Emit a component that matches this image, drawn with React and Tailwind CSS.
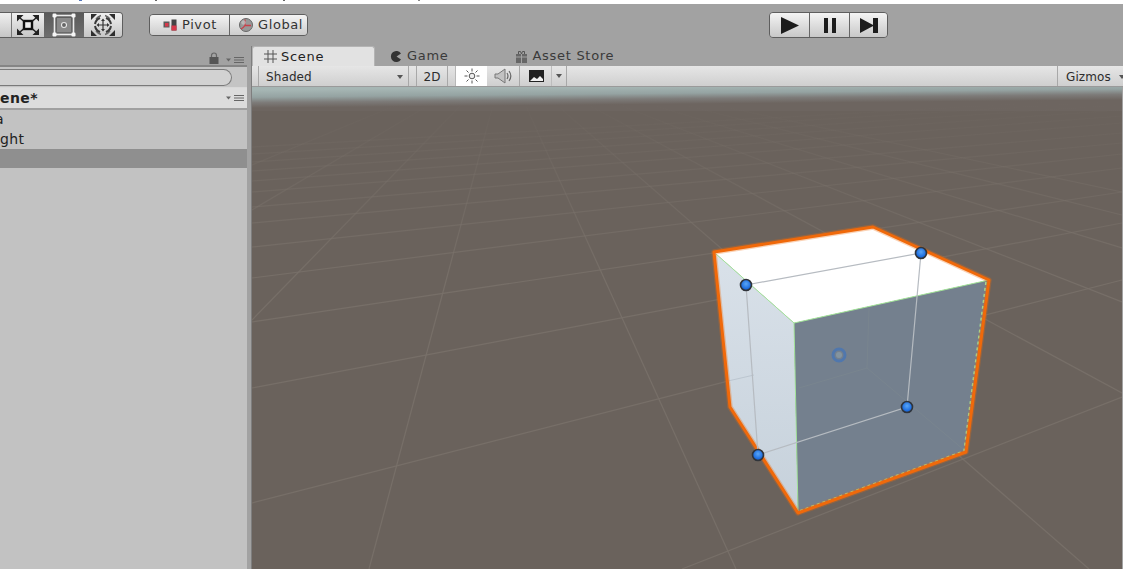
import React from 'react'

const ui = { fontFamily: '"DejaVu Sans", sans-serif' }

// ground plane lines running towards the far right edge
const crossLines = [
  [683, 569, 1123, 397],
  [253, 503, 1123, 280],
  [253, 388, 1123, 223],
  [253, 322, 1123, 192],
  [253, 278, 1123, 168],
  [253, 247, 1123, 154],
  [253, 223, 1123, 143],
  [253, 207, 1123, 133],
  [253, 192, 1123, 123],
  [253, 181, 1123, 116],
  [253, 171, 1123, 110],
  [253, 162, 1123, 105],
  [253, 154, 1123, 101],
  [253, 147, 1123, 98],
]

// these all meet at the vanishing point above the horizon
const vanishX = 506
const vanishY = 60
const depthEnds = [
  [370, 569],
  [737, 569],
  [1090, 569],
  [253, 320],
  [253, 210],
  [253, 165],
  [1123, 393],
  [1123, 302],
  [1123, 248],
  [1123, 215],
  [1123, 192],
]

const handles = [
  [747, 285],
  [922, 253],
  [908, 407],
  [759, 455],
]

function MenuIcon() {
  return (
    <svg width="18" height="8" viewBox="0 0 18 8" className="block">
      <path d="M0 2.5h5L2.5 5.5z" fill="#666" />
      <path d="M8 1.5h10M8 4h10M8 6.5h10" stroke="#666" strokeWidth="1.1" />
    </svg>
  )
}

function ScaleIcon() {
  return (
    <svg width="24" height="22" viewBox="0 0 24 22">
      <rect x="8" y="7" width="8" height="8" fill="#eee" stroke="#111" strokeWidth="2.4" />
      <path d="M1 1h6.5L1 7.5zM23 1h-6.5L23 7.5zM1 21h6.5L1 14.5zM23 21h-6.5L23 14.5z" fill="#222" />
      <path d="M4 4l3.5 3M20 4l-3.5 3M4 18l3.5-3M20 18l-3.5-3" stroke="#222" strokeWidth="1.6" />
    </svg>
  )
}

function RectIcon() {
  return (
    <svg width="24" height="24" viewBox="0 0 24 24">
      <rect x="5" y="5" width="14" height="14" fill="#8a8a8a" />
      <rect x="2.5" y="2.5" width="19" height="19" fill="none" stroke="#ececec" strokeWidth="1.6" />
      <circle cx="12" cy="12" r="2.5" fill="#666" stroke="#e6e6e6" strokeWidth="1.1" />
      <rect x="0.5" y="0.5" width="4" height="4" rx="1.2" fill="#f6f6f6" />
      <rect x="19.5" y="0.5" width="4" height="4" rx="1.2" fill="#f6f6f6" />
      <rect x="0.5" y="19.5" width="4" height="4" rx="1.2" fill="#f6f6f6" />
      <rect x="19.5" y="19.5" width="4" height="4" rx="1.2" fill="#f6f6f6" />
    </svg>
  )
}

function TransformIcon() {
  return (
    <svg width="26" height="24" viewBox="0 0 26 24">
      {/* rotate arcs with scale wedges in the corners */}
      <path d="M6 6A10 10 0 0 1 11 2.5M20 6A10 10 0 0 0 15 2.5M6 18A10 10 0 0 0 11 21.5M20 18A10 10 0 0 1 15 21.5" fill="none" stroke="#666" strokeWidth="1.4" />
      <path d="M1 1h6L1 7zM25 1h-6l6 6zM1 23h6l-6-6zM25 23h-6l6-6z" fill="#2e2e2e" />
      <path d="M5 11a8 8 0 0 1 5-6M21 11a8 8 0 0 0-5-6M5 13a8 8 0 0 0 5 6M21 13a8 8 0 0 1-5 6" fill="none" stroke="#3a3a3a" strokeWidth="2" />
      <path d="M13 8v8M9 12h8" stroke="#333" strokeWidth="1.2" />
      <path d="M13 5.5l2 2.5h-4zM13 18.5l2-2.5h-4zM6.5 12L9 10v4zM19.5 12L17 10v4z" fill="#333" />
    </svg>
  )
}

function PivotIcon() {
  return (
    <svg width="14" height="12" viewBox="0 0 14 12">
      <rect x="0.5" y="2.5" width="6" height="6" fill="#5a5a5a" />
      <rect x="2" y="4" width="3.5" height="3.5" fill="#d8384a" />
      <rect x="8.5" y="0.5" width="5" height="11" fill="#444" />
      <rect x="8.5" y="6.5" width="5" height="5" fill="#d8384a" />
    </svg>
  )
}

function GlobalIcon() {
  return (
    <svg width="14" height="14" viewBox="0 0 14 14">
      <circle cx="7" cy="7" r="6.5" fill="#989898" stroke="#666" />
      <path d="M6 1.5v6h6M2 11c2-1 3-2 4-3.5" stroke="#c8404a" strokeWidth="1.3" fill="none" />
      <circle cx="4.5" cy="4.5" r="2.2" fill="#c8c8c8" opacity="0.7" />
    </svg>
  )
}

function Sun() {
  return (
    <svg width="16" height="16" viewBox="0 0 16 16">
      <circle cx="8" cy="8" r="2.8" fill="#eee" stroke="#555" />
      <path d="M8 0.5v3M8 12.5v3M0.5 8h3M12.5 8h3M2.5 2.5l2 2M11.5 11.5l2 2M13.5 2.5l-2 2M4.5 11.5l-2 2" stroke="#555" />
    </svg>
  )
}

function Speaker() {
  return (
    <svg width="18" height="16" viewBox="0 0 18 16">
      <path d="M1 6h3L11 1v14L4 10H1z" fill="#c2c2c2" stroke="#777" />
      <path d="M13 5c1.3 2 1.3 4 0 6M15 3c2.2 3 2.2 7 0 10" fill="none" stroke="#666" strokeWidth="1.2" />
    </svg>
  )
}

function SceneView() {
  return (
    <svg viewBox="253 87 870 482" className="block w-[870px] h-[482px]">
      <defs>
        <linearGradient id="sky" gradientUnits="userSpaceOnUse" x1="680" y1="86" x2="680.17" y2="104">
          <stop offset="0" stopColor="#a6b6b4" />
          <stop offset="0.4" stopColor="#95a3a2" />
          <stop offset="0.7" stopColor="#7d7b79" />
          <stop offset="1" stopColor="#6d6560" />
        </linearGradient>
        <linearGradient id="gridFade" gradientUnits="userSpaceOnUse" x1="0" y1="100" x2="0" y2="280">
          <stop offset="0" stopColor="#787069" stopOpacity="0" />
          <stop offset="0.35" stopColor="#787069" stopOpacity="0.35" />
          <stop offset="1" stopColor="#787069" stopOpacity="0.9" />
        </linearGradient>
        <linearGradient id="sideFace" x1="0" y1="0" x2="0" y2="1">
          <stop offset="0" stopColor="#d9e1e9" />
          <stop offset="1" stopColor="#c6d1db" />
        </linearGradient>
        <radialGradient id="knob" cx="0.5" cy="0.4" r="0.6">
          <stop offset="0" stopColor="#5aa6f5" />
          <stop offset="0.7" stopColor="#1f6fe0" />
          <stop offset="1" stopColor="#1a55b0" />
        </radialGradient>
      </defs>

      <rect x="253" y="87" width="870" height="482" fill="#6a625c" />
      <rect x="253" y="87" width="870" height="24" fill="url(#sky)" />

      {/* ground grid */}
      <g stroke="url(#gridFade)" strokeWidth="1.2" fill="none">
        {crossLines.map(([x1, y1, x2, y2]) => (
          <line key={`${y1}-${y2}`} x1={x1} y1={y1} x2={x2} y2={y2} />
        ))}
        {depthEnds.map(([x, y]) => {
          // start the line just below the horizon
          const t = (106 - vanishY) / (y - vanishY)
          return <line key={`${x}-${y}`} x1={vanishX + (x - vanishX) * t} y1={106} x2={x} y2={y} />
        })}
      </g>

      {/* cube faces */}
      <polygon points="715,252 874,227 990,280 795,323" fill="#ffffff" />
      <polygon points="715,252 795,323 799,513 731,407" fill="url(#sideFace)" />
      <polygon points="795,323 990,280 967,452 799,513" fill="#74808e" />

      {/* back edges seen through the faces */}
      <path d="M870 308L868 368L800 388M868 368L965 450" stroke="#79858f" strokeWidth="1" fill="none" />
      <path d="M729 381L755 375" stroke="#bcc6d0" fill="none" />

      {/* selected mesh wire */}
      <g stroke="#a3e49a" strokeWidth="1" fill="none">
        <path d="M717 254L795 323L990 280M795 323L799 511" />
        <path d="M987 282L965 451L800 511" strokeDasharray="3 3" strokeWidth="1.5" />
      </g>

      {/* selection outline */}
      <polygon
        points="715,252 874,227 990,280 967,452 799,513 731,407"
        fill="none"
        stroke="#f0690a"
        strokeOpacity="0.3"
        strokeWidth="5.5"
        strokeLinejoin="round"
      />
      <polygon
        points="715,252 874,227 990,280 967,452 799,513 731,407"
        fill="none"
        stroke="#f0690a"
        strokeWidth="3"
        strokeLinejoin="round"
      />

      {/* rect handles */}
      <polygon points="747,285 922,253 908,407 759,455" fill="none" stroke="#b6bbc1" strokeWidth="1.2" />
      {handles.map(([cx, cy]) => (
        <circle key={cx} cx={cx} cy={cy} r="5.5" fill="url(#knob)" stroke="#30343a" strokeWidth="1.6" />
      ))}
      <circle cx="840" cy="355" r="3" fill="#84949f" />
      <circle cx="840" cy="355" r="6" fill="none" stroke="#5077ad" strokeWidth="3" />
    </svg>
  )
}

export default function App() {
  return (
    <div className="w-[1123px] h-[569px] overflow-hidden bg-[#a2a2a2] text-[#222]" style={ui}>
      {/* bottom edge of the menu bar */}
      <div className="flex h-[4px] bg-white">
        <span className="ml-[79px] w-[3px] h-[1px] bg-[#5577bb]" />
        <span className="ml-[73px] w-[2px] h-[1px] bg-[#666]" />
        <span className="ml-[126px] w-[2px] h-[1px] bg-[#666]" />
        <span className="ml-[133px] w-[2px] h-[1px] bg-[#888]" />
      </div>

      {/* main toolbar */}
      <div className="flex items-start h-[42px]">
        <div className="flex mt-[8px] h-[26px] w-[123px] rounded-r-[4px] border border-l-0 border-[#5e5e5e] overflow-hidden">
          <div className="w-[12px] bg-linear-to-b from-[#f0f0f0] to-[#c6c6c6] border-r border-[#777]" />
          <div className="w-[32px] flex items-center justify-center bg-linear-to-b from-[#f0f0f0] to-[#c6c6c6]">
            <ScaleIcon />
          </div>
          <div className="w-[40px] flex items-center justify-center bg-linear-to-b from-[#5a5a5a] to-[#6e6e6e]">
            <RectIcon />
          </div>
          <div className="flex-1 flex items-center justify-center bg-linear-to-b from-[#f0f0f0] to-[#c6c6c6]">
            <TransformIcon />
          </div>
        </div>

        <div className="flex mt-[10px] ml-[26px] h-[22px] w-[159px] rounded-[4px] border border-[#5e5e5e] overflow-hidden text-[13px] tracking-[0.6px] text-[#333]">
          <div className="w-[80px] flex items-center pl-[13px] gap-[5px] bg-linear-to-b from-[#f4f4f4] to-[#cdcdcd] border-r border-[#666]">
            <PivotIcon />
            <span>Pivot</span>
          </div>
          <div className="flex-1 flex items-center pl-[9px] gap-[5px] bg-linear-to-b from-[#f4f4f4] to-[#cdcdcd]">
            <GlobalIcon />
            <span>Global</span>
          </div>
        </div>

        <div className="flex mt-[8px] ml-[461px] h-[26px] w-[119px] rounded-[4px] border border-[#5e5e5e] overflow-hidden">
          <div className="w-[40px] flex items-center justify-center bg-linear-to-b from-[#f4f4f4] to-[#c8c8c8] border-r border-[#666]">
            <svg width="18" height="17" viewBox="0 0 18 17"><path d="M0 0l18 8.5L0 17z" fill="#1c1c1c" /></svg>
          </div>
          <div className="w-[40px] flex items-center justify-center bg-linear-to-b from-[#f4f4f4] to-[#c8c8c8] border-r border-[#666]">
            <svg width="12" height="15" viewBox="0 0 12 15"><path d="M0 0h4v15H0zM8 0h4v15H8z" fill="#1c1c1c" /></svg>
          </div>
          <div className="flex-1 flex items-center justify-center bg-linear-to-b from-[#f4f4f4] to-[#c8c8c8]">
            <svg width="18" height="15" viewBox="0 0 18 15"><path d="M0 0l14 7.5L0 15zM13 0h5v15h-5z" fill="#1c1c1c" /></svg>
          </div>
        </div>
      </div>

      <div className="flex h-[523px]">
        {/* hierarchy panel */}
        <div className="w-[247px] flex flex-col">
          <div className="h-[19px] flex items-end justify-end pb-[1px] pr-[3px] gap-[7px]">
            <svg width="10" height="12" viewBox="0 0 10 12" className="block">
              <path d="M2.5 5V3.5a2.5 2.5 0 0 1 5 0V5" fill="none" stroke="#666" strokeWidth="1.2" />
              <rect x="0.5" y="5" width="9" height="7" fill="#555" />
            </svg>
            <MenuIcon />
          </div>
          <div className="h-[23px] bg-[#c4c4c4] border-t-2 border-[#858585] flex items-center border-b border-b-[#d8d8d8]">
            <div className="w-[232px] h-[17px] rounded-r-full border border-l-0 border-[#7a7a7a] bg-[#d2d2d2]" />
          </div>
          <div className="h-[22px] bg-[#dcdcdc] border-b-2 border-[#a0a0a0] flex items-center justify-between pr-[3px]">
            <span className="text-[14px] font-bold tracking-[0.4px]">ene*</span>
            <MenuIcon />
          </div>
          <div className="flex-1 bg-[#c2c2c2] text-[14px] overflow-hidden">
            <div className="h-[19px] flex items-center"><span className="-ml-[5px]">a</span></div>
            <div className="h-[20px] flex items-center tracking-[0.4px]">ght</div>
            <div className="h-[19px] bg-[#8f8f8f]" />
          </div>
        </div>

        <div className="w-[5px] bg-[#a2a2a2] border-r border-[#7e7e7e]" />

        {/* scene panel */}
        <div className="flex-1 flex flex-col min-w-0">
          <div className="h-[20px] flex items-stretch text-[13px] tracking-[0.7px] text-[#3a3a3a]">
            <div className="w-[123px] flex items-center gap-[4px] pl-[11px] rounded-t-[3px] bg-[#e2e2e2] border border-b-0 border-[#b4b4b4] text-[#222]">
              <svg width="13" height="13" viewBox="0 0 13 13">
                <path d="M4 0v13M9 0v13M0 4h13M0 9h13" stroke="#555" />
              </svg>
              <span>Scene</span>
            </div>
            <div className="flex items-center gap-[6px] ml-[15px]">
              <svg width="11" height="11" viewBox="0 0 11 11">
                <path d="M11 2.5A5.5 5.5 0 1 0 11 8.5L6.5 5.5z" fill="#333" />
              </svg>
              <span>Game</span>
            </div>
            <div className="flex items-center gap-[5px] ml-[66px]">
              <svg width="13" height="13" viewBox="0 0 13 13">
                <path d="M1 4h11v9H1z" fill="#666" />
                <path d="M3.5 4V1.5h2L6.5 4l1-2.5h2V4" fill="none" stroke="#555" />
                <path d="M6.5 4v9M1 7h11" stroke="#a2a2a2" />
              </svg>
              <span>Asset Store</span>
            </div>
          </div>

          {/* scene view options */}
          <div className="h-[21px] flex items-stretch bg-linear-to-b from-[#e6e6e6] to-[#cfcfcf] text-[12px] tracking-[0.1px] text-[#2c2c2c] border-b border-[#9a9a9a]">
            <div className="w-[7px] border-r border-[#a8a8a8]" />
            <div className="w-[150px] flex items-center justify-between pl-[7px] pr-[5px] pt-[1px] border-r border-[#a8a8a8]">
              <span>Shaded</span>
              <svg width="6" height="4" viewBox="0 0 6 4"><path d="M0 0h6L3 4z" fill="#555" /></svg>
            </div>
            <div className="w-[8px] border-r border-[#a8a8a8]" />
            <div className="w-[31px] flex items-center justify-center pt-[1px] border-r border-[#a8a8a8]">2D</div>
            <div className="w-[8px] border-r border-[#b8b8b8]" />
            <div className="w-[31px] flex items-center justify-center bg-white">
              <Sun />
            </div>
            <div className="w-[33px] flex items-center justify-center border-r border-[#a8a8a8]">
              <Speaker />
            </div>
            <div className="w-[47px] flex items-center border-r border-[#a8a8a8] pl-[9px]">
              <svg width="15" height="12" viewBox="0 0 15 12">
                <rect width="15" height="12" fill="#222" />
                <path d="M1 11l4-4 3 2 3-3 3 3v2z" fill="#f2f2f2" />
              </svg>
              <span className="ml-[7px] h-full w-px bg-[#bdbdbd]" />
              <svg width="6" height="4" viewBox="0 0 6 4" className="ml-[4px]"><path d="M0 0h6L3 4z" fill="#555" /></svg>
            </div>
            <div className="flex-1" />
            <div className="w-[66px] flex items-center gap-[8px] pl-[8px] pt-[1px] border-l border-[#a8a8a8] whitespace-nowrap">
              <span>Gizmos</span>
              <svg width="6" height="4" viewBox="0 0 6 4" className="shrink-0"><path d="M0 0h6L3 4z" fill="#555" /></svg>
            </div>
          </div>

          <SceneView />
        </div>
      </div>
    </div>
  )
}
